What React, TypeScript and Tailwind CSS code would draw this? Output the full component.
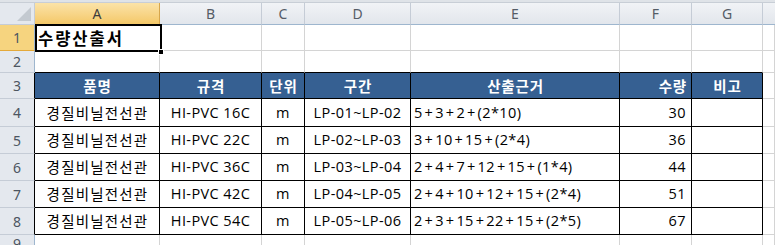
const cols = ["A", "B", "C", "D", "E", "F", "G"];

const rows = [
  { name: "경질비닐전선관", spec: "HI-PVC 16C", unit: "m", range: "LP-01~LP-02", calc: "5+3+2+(2*10)", qty: 30 },
  { name: "경질비닐전선관", spec: "HI-PVC 22C", unit: "m", range: "LP-02~LP-03", calc: "3+10+15+(2*4)", qty: 36 },
  { name: "경질비닐전선관", spec: "HI-PVC 36C", unit: "m", range: "LP-03~LP-04", calc: "2+4+7+12+15+(1*4)", qty: 44 },
  { name: "경질비닐전선관", spec: "HI-PVC 42C", unit: "m", range: "LP-04~LP-05", calc: "2+4+10+12+15+(2*4)", qty: 51 },
  { name: "경질비닐전선관", spec: "HI-PVC 54C", unit: "m", range: "LP-05~LP-06", calc: "2+3+15+22+15+(2*5)", qty: 67 },
];

const font = "font-['Open_Sans','Noto_Sans_CJK_KR',sans-serif]";

// row header cell (1, 2, 3...)
const RowHead = ({ n, active, dark }: { n: number | string; active?: boolean; dark?: boolean }) => (
  <div
    className={`flex items-center justify-center border-b text-[14px] text-[#4c5561] font-['Noto_Sans',sans-serif] ${
      active ? "bg-[#f6d47f] border-b-[#e4a93a]" : "bg-[#e4e8ee] border-b-[#c5ccd6]"
    } ${dark ? "border-r border-r-black" : "border-r border-r-[#9eb6ce]"}`}
  >
    {n}
  </div>
);

const Blank = ({ bottomDark }: { bottomDark?: boolean }) => (
  <div className={`bg-white border-r border-r-[#d4d4d4] border-b ${bottomDark ? "border-b-black" : "border-b-[#d4d4d4]"}`} />
);

const Th = ({ children, right }: { children: React.ReactNode; right?: boolean }) => (
  <div
    className={`flex items-center bg-[#366092] border-r border-b border-black text-white font-bold text-[14.5px] tracking-[0.8px] font-['Noto_Sans_CJK_KR',sans-serif] ${
      right ? "justify-end pr-[4px]" : "justify-center pl-[1px]"
    }`}
  >
    {children}
  </div>
);

const Td = ({
  children,
  align = "center",
  hangul,
}: {
  children?: React.ReactNode;
  align?: "center" | "left" | "right";
  hangul?: boolean;
}) => (
  <div
    className={`flex items-center bg-white border-r border-b border-black text-black whitespace-nowrap ${
      hangul ? "text-[14.5px] tracking-[1.2px] pl-[1px] font-['Noto_Sans_CJK_KR',sans-serif]" : "text-[14.5px] tracking-[0.4px]"
    } ${align === "center" ? "justify-center" : align === "left" ? "justify-start pl-[3px]" : "justify-end pr-[5px]"}`}
  >
    {children}
  </div>
);

// formula text: the plus signs sit wide, like the sheet's font
const Formula = ({ text }: { text: string }) => (
  <span className="inline-flex">
    {text.split("+").map((part, i) => (
      <span key={i} className="inline-flex">
        {i > 0 && <span className="inline-block w-[12.5px] text-center">+</span>}
        {part}
      </span>
    ))}
  </span>
);

export default function App() {
  return (
    <div
      className={`w-[775px] h-[245px] overflow-hidden bg-white grid grid-cols-[35px_125px_102px_43px_106px_209px_72px_71px_12px] grid-rows-[3px_22px_26px_22px_26px_28px_27px_27px_27px_27px_10px] ${font}`}
    >
      {/* top strip */}
      <div className="col-span-9 bg-[#dfe3e8] border-b border-[#c8ced6]" />

      {/* column header */}
      <div className="relative bg-[#e4e8ee] border-r border-b border-[#c5ccd6]">
        <div className="absolute right-[3px] bottom-[3px] w-0 h-0 border-l-[14px] border-l-transparent border-b-[14px] border-b-[#c3c9d0]" />
      </div>
      {cols.map((c) => (
        <div
          key={c}
          className={`flex items-center justify-center border-r text-[14px] font-['Noto_Sans',sans-serif] ${
            c === "A"
              ? "bg-gradient-to-b from-[#fbe3a8] to-[#f4c867] border-r-[#d7a64b] border-b border-b-[#e09a2a] text-[#3d3d3d]"
              : "bg-gradient-to-b from-[#f1f3f6] to-[#e2e6ec] border-r-[#c5ccd6] border-b border-b-[#9eb6ce] text-[#555c66]"
          }`}
        >
          {c}
        </div>
      ))}
      <div className="bg-gradient-to-b from-[#f1f3f6] to-[#e2e6ec] border-b border-b-[#9eb6ce]" />

      {/* row 1 */}
      <RowHead n={1} active />
      <div className="relative flex items-center pl-[3px] bg-white text-[16.5px] font-bold tracking-[2px] text-black font-['Noto_Sans_CJK_KR',sans-serif]">
        수량산출서
        <div className="absolute left-0 top-[-1px] right-[-2px] bottom-[-1px] border-2 border-black pointer-events-none" />
        <div className="absolute right-[-4px] bottom-[-4px] w-[6px] h-[6px] bg-black border border-white" />
      </div>
      {[0, 1, 2, 3, 4, 5].map((i) => (
        <Blank key={i} />
      ))}
      <Blank />

      {/* row 2 */}
      <RowHead n={2} />
      {[0, 1, 2, 3, 4, 5, 6].map((i) => (
        <Blank key={i} bottomDark />
      ))}
      <Blank />

      {/* row 3 header */}
      <RowHead n={3} dark />
      <Th>품명</Th>
      <Th>규격</Th>
      <Th>단위</Th>
      <Th>구간</Th>
      <Th>산출근거</Th>
      <Th right>수량</Th>
      <Th>비고</Th>
      <Blank />

      {rows.map((r, i) => (
        <div key={i} className="contents">
          <RowHead n={i + 4} dark />
          <Td hangul>{r.name}</Td>
          <Td>{r.spec}</Td>
          <Td>{r.unit}</Td>
          <Td>{r.range}</Td>
          <Td align="left">
            <Formula text={r.calc} />
          </Td>
          <Td align="right">{r.qty}</Td>
          <Td />
          <Blank />
        </div>
      ))}

      {/* row 9 (cut off) */}
      <div className="flex justify-center pt-[2px] bg-[#e4e8ee] border-r border-r-[#9eb6ce] text-[14px] text-[#4c5561] font-['Noto_Sans',sans-serif] leading-none">
        9
      </div>
      {[0, 1, 2, 3, 4, 5, 6, 7].map((i) => (
        <div key={i} className="bg-white border-r border-r-[#d4d4d4]" />
      ))}
    </div>
  );
}
